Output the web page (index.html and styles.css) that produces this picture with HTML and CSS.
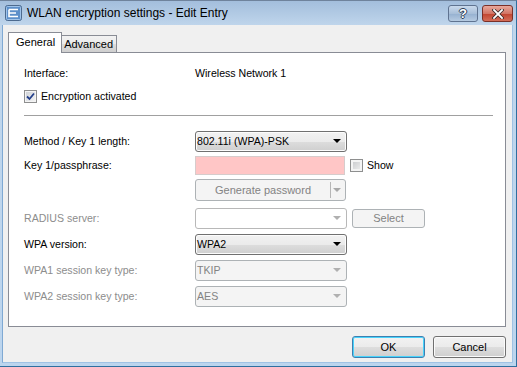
FILE: index.html
```html
<!DOCTYPE html>
<html lang="en">

<head>
  <meta charset="UTF-8">
  <title>WLAN encryption settings - Edit Entry</title>
  <link rel="stylesheet" href="styles.css">
</head>

<body>
  <div class="window">
    <div class="titlebar">
      <svg class="app-icon" width="17" height="16" viewBox="0 0 17 16">
        <rect x="0.5" y="0.5" width="16" height="15" rx="2" fill="#5d8fc9" stroke="#4d6a8e"/>
        <rect x="1.5" y="1.5" width="14" height="13" rx="1" fill="none" stroke="#9fc3ea"/>
        <path d="M4 4.5 H13 M4 4.5 V11.5 H13 M4 8 H11" stroke="#ffffff" stroke-width="1.6" fill="none"/>
      </svg>
      <span class="title">WLAN encryption settings - Edit Entry</span>
      <div class="caption-btns">
        <div class="cap-btn help">?</div>
        <div class="cap-btn close">
          <svg width="12" height="10" viewBox="0 0 12 10">
            <path d="M2 1 L10 9 M10 1 L2 9" stroke="#3a2a28" stroke-width="3.4" stroke-linecap="square"/>
            <path d="M2 1 L10 9 M10 1 L2 9" stroke="#ffffff" stroke-width="1.8" stroke-linecap="square"/>
          </svg>
        </div>
      </div>
    </div>

    <div class="client">
      <div class="tabs">
        <div class="tab active">General</div>
        <div class="tab">Advanced</div>
      </div>

      <div class="panel">
        <div class="info-row">
          <span class="label">Interface:</span>
          <span>Wireless Network 1</span>
        </div>
        <div class="check-row">
          <span class="checkbox">
            <svg width="9" height="9" viewBox="0 0 9 9">
              <path d="M1 4.5 L3.5 7 L8 1.5" stroke="#233f8a" stroke-width="1.8" fill="none"/>
            </svg>
          </span>
          <span>Encryption activated</span>
        </div>
        <div class="separator"></div>

        <div class="row">
          <span class="label">Method / Key 1 length:</span>
          <div class="select">802.11i (WPA)-PSK<span class="arrow"></span></div>
        </div>
        <div class="row short">
          <span class="label">Key 1/passphrase:</span>
          <div class="input invalid"></div>
          <span class="checkbox empty"></span>
          <span>Show</span>
        </div>
        <div class="row short gen">
          <span class="label"></span>
          <div class="split-btn">
            <span class="split-main">Generate password</span>
            <span class="split-arrow"><span class="arrow"></span></span>
          </div>
        </div>
        <div class="row radius">
          <span class="label disabled">RADIUS server:</span>
          <div class="select combo disabled"><span class="arrow"></span></div>
          <div class="btn-small disabled">Select</div>
        </div>
        <div class="row">
          <span class="label">WPA version:</span>
          <div class="select">WPA2<span class="arrow"></span></div>
        </div>
        <div class="row">
          <span class="label disabled">WPA1 session key type:</span>
          <div class="select disabled">TKIP<span class="arrow"></span></div>
        </div>
        <div class="row">
          <span class="label disabled">WPA2 session key type:</span>
          <div class="select disabled">AES<span class="arrow"></span></div>
        </div>
      </div>

      <div class="footer">
        <button class="btn default">OK</button>
        <button class="btn">Cancel</button>
      </div>
    </div>
  </div>
</body>

</html>
```

FILE: styles.css
```css
body {
  margin: 0;
  font-family: 'Liberation Sans', Arial, sans-serif;
  font-size: 10.6px;
  color: #000;
  background: #fff;
}

.window {
  width: 517px;
  height: 367px;
  box-sizing: border-box;
  display: flex;
  flex-direction: column;
  background: linear-gradient(#a3bedc, #c0d6ec 25px, #bcd5ee);
  border-top: 1px solid #6f839c;
  border-right: 1px solid #2f6f9f;
  border-bottom: 1px solid #2f6f9f;
  padding: 0 3px 3px 2px;
}

/* title bar */
.titlebar {
  height: 24px;
  display: flex;
  align-items: center;
  padding-left: 3px;
}

.app-icon {
  margin-top: -1px;
}

.title {
  margin-left: 5px;
  font-size: 12px;
  color: #000;
  margin-top: -1px;
}

.caption-btns {
  margin-left: auto;
  display: flex;
  gap: 4px;
  align-self: flex-start;
  margin-top: 4px;
}

.cap-btn {
  height: 15px;
  border-radius: 3px;
  display: flex;
  align-items: center;
  justify-content: center;
}

.cap-btn.help {
  width: 28px;
  border: 1px solid #5f7390;
  background: linear-gradient(#c9d9ec, #a8bfd9 50%, #95b0d0 51%, #b6cbe2);
  color: #fff;
  font-weight: bold;
  font-size: 13px;
  text-shadow: -1px 0 #2d3e56, 1px 0 #2d3e56, 0 -1px #2d3e56, 0 1px #2d3e56;
}

.cap-btn.close {
  width: 29px;
  border: 1px solid #7a3028;
  background: linear-gradient(#e8a89c, #d27565 50%, #c0432f 51%, #d46d58);
}

/* client area */
.client {
  flex: 1;
  background: #f0f0f0;
  border-left: 1px solid #7fa9d3;
  border-right: 1px solid #9fc2e4;
  border-bottom: 1px solid #9fc2e4;
  display: flex;
  flex-direction: column;
}

.tabs {
  display: flex;
  align-items: flex-end;
  padding: 7px 0 0 5px;
  position: relative;
  z-index: 1;
}

.tab {
  height: 16px;
  padding: 0 3px 0 2px;
  display: flex;
  align-items: center;
  border: 1px solid #898c95;
  border-bottom: none;
  border-left: none;
  background: linear-gradient(#f2f2f2, #ebebeb 50%, #dddddd 51%, #cfcfcf);
  font-size: 11px;
}

.tab.active {
  padding: 3px 6px 0 7px;
  background: #fff;
  border-left: 1px solid #898c95;
  margin-bottom: -1px;
  align-items: flex-start;
  box-sizing: border-box;
  height: 21px;
}

.panel {
  margin: 0 6px 0 5px;
  height: 275px;
  box-sizing: border-box;
  background: #fff;
  border: 1px solid #898c95;
  padding: 10px 12px 0 15px;
}

.info-row {
  height: 19px;
  display: flex;
  align-items: center;
}

.label {
  width: 171px;
  flex: none;
}

.label.disabled {
  color: #8d8d8d;
}

.check-row {
  height: 18px;
  margin-top: 5px;
  display: flex;
  align-items: center;
  gap: 4px;
}

.checkbox {
  width: 11px;
  height: 11px;
  flex: none;
  border: 1px solid #8e8f8f;
  background: linear-gradient(135deg, #cbcfd5, #f6f6f6);
  box-shadow: inset 0 0 0 1px #f4f4f4;
  display: flex;
  align-items: center;
  justify-content: center;
}

.checkbox.empty {
  margin: 0 4px 0 5px;
  background: linear-gradient(135deg, #c4c6c9, #f2f2f2);
  box-shadow: inset 0 0 0 2px #f4f4f4;
}

.separator {
  height: 1px;
  background: #a0a0a0;
  margin: 10px 0 12px;
}

.row {
  height: 26px;
  display: flex;
  align-items: center;
}

.row.short {
  height: 22px;
}

.row.gen {
  margin-top: 3px;
}

.row.radius {
  margin-top: 4px;
}

.select {
  width: 149px;
  height: 19px;
  flex: none;
  box-sizing: content-box;
  border: 1px solid #707070;
  border-radius: 3px;
  background: linear-gradient(#f2f2f2, #ebebeb 50%, #dddddd 51%, #cfcfcf);
  display: flex;
  align-items: center;
  padding-left: 1px;
  box-shadow: inset 0 0 0 1px #fcfcfc;
}

.select.disabled {
  border-color: #adb2b5;
  background: #f4f4f4;
  color: #838383;
  box-shadow: none;
}

.select.combo {
  background: #fff;
  border-color: #b8b8b8;
}

.arrow {
  margin-left: auto;
  margin-right: 5px;
  width: 0;
  height: 0;
  border-left: 4px solid transparent;
  border-right: 4px solid transparent;
  border-top: 4px solid #000;
}

.disabled .arrow {
  border-top-color: #b0b0b0;
}

.input {
  width: 148px;
  height: 17px;
  flex: none;
  border: 1px solid #d6cccc;
}

.input.invalid {
  background: #ffc6c6;
}

.split-btn {
  width: 149px;
  height: 20px;
  flex: none;
  border: 1px solid #adb2b5;
  border-radius: 3px;
  background: #f4f4f4;
  color: #838383;
  display: flex;
  font-size: 11px;
}

.split-main {
  flex: 1;
  display: flex;
  align-items: center;
  justify-content: center;
}

.split-arrow {
  width: 14px;
  display: flex;
  align-items: center;
  border-left: 1px solid #b6b6b6;
  margin: 2px 0;
}

.split-arrow .arrow {
  border-top-color: #a8a8a8;
  margin-right: 4px;
}

.btn-small {
  width: 71px;
  height: 17px;
  flex: none;
  margin-left: 5px;
  border: 1px solid #adb2b5;
  border-radius: 3px;
  background: #f4f4f4;
  color: #838383;
  display: flex;
  align-items: center;
  justify-content: center;
  font-size: 11px;
}

/* dialog buttons */
.footer {
  display: flex;
  justify-content: flex-end;
  gap: 8px;
  padding: 9px 6px 0 0;
}

.btn {
  width: 73px;
  height: 22px;
  font-family: inherit;
  font-size: 11px;
  color: #000;
  border: 1px solid #707070;
  border-radius: 3px;
  background: linear-gradient(#f2f2f2, #ebebeb 50%, #dddddd 51%, #cfcfcf);
  box-shadow: inset 0 0 0 1px #fbfbfb;
  padding: 0;
}

.btn.default {
  border-color: #3c7fb1;
  box-shadow: inset 0 0 0 1px #48d3fb;
}
```
